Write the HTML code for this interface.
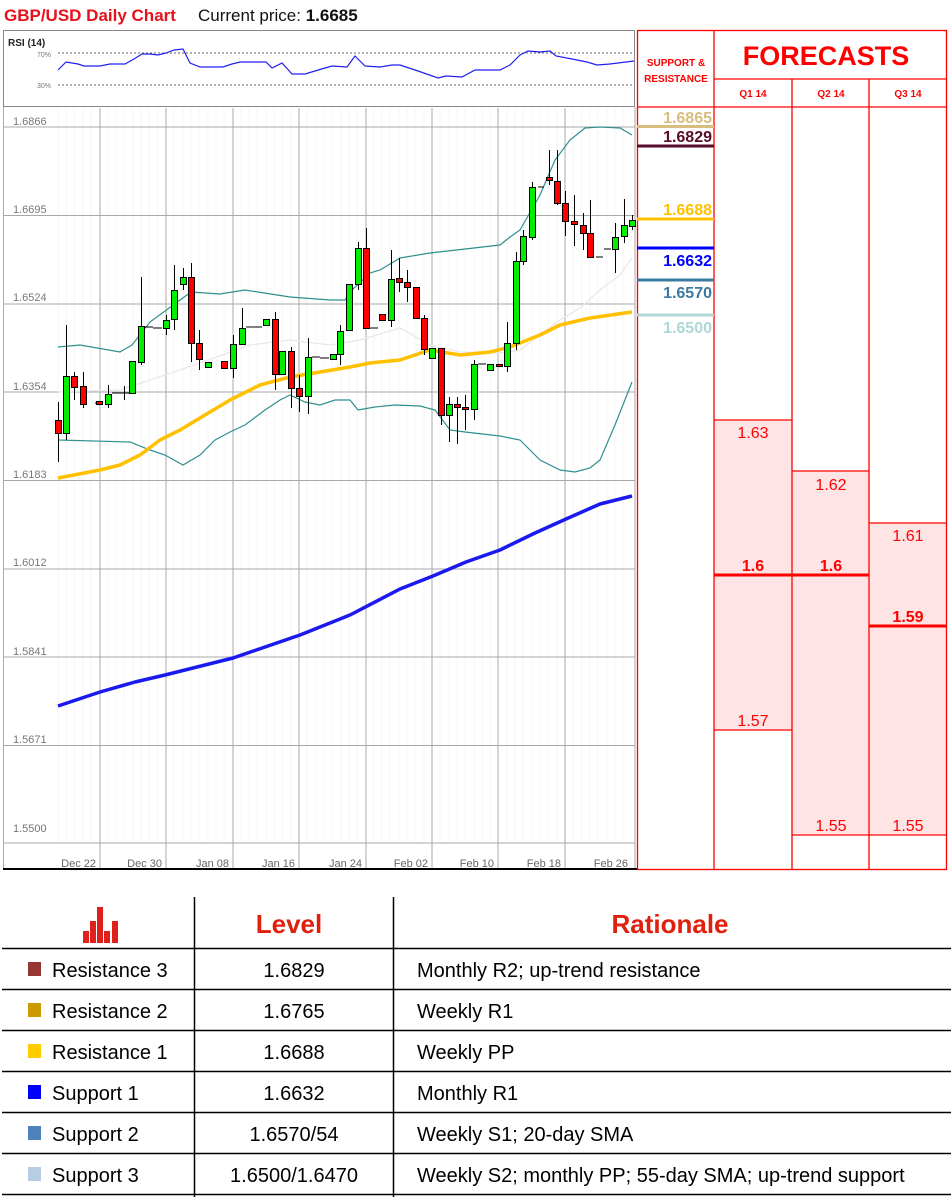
<!DOCTYPE html>
<html><head><meta charset="utf-8"><style>
body{margin:0;width:951px;height:1197px;overflow:hidden;background:#fff;font-family:"Liberation Sans Narrow","Liberation Sans",sans-serif}
svg text{font-family:"Liberation Sans Narrow","Liberation Sans",sans-serif}
</style></head><body>
<svg width="951" height="1197" viewBox="0 0 951 1197" xmlns="http://www.w3.org/2000/svg">
<rect width="951" height="1197" fill="#fff"/>
<text x="4" y="21" font-size="17" font-weight="bold" fill="#e8101a">GBP/USD Daily Chart</text>
<text x="198" y="21" font-size="17" fill="#111">Current price: <tspan font-weight="bold">1.6685</tspan></text>

<rect x="3.5" y="30.5" width="631" height="76" fill="#fff" stroke="#888"/>
<text x="8" y="46" font-size="10" font-weight="bold" fill="#222">RSI (14)</text>
<text x="37" y="57" font-size="7" fill="#777">70%</text>
<text x="37" y="88" font-size="7" fill="#777">30%</text>
<line x1="58" y1="53" x2="634" y2="53" stroke="#666" stroke-dasharray="2,2"/>
<line x1="58" y1="85" x2="634" y2="85" stroke="#666" stroke-dasharray="2,2"/>
<polyline fill="none" stroke="#2020f0" stroke-width="1.2" points="58,70 66,62 78,64 84,66 100,66 110,64 125,64 134,59 142,54 150,54 158,55 166,53 174,50 183,49 190,63 200,67 215,67 223,67 232,64 240,62 266,62 272,68 282,63 292,74 305,74 325,68 332,66 347,67 355,56 365,66 380,67 392,65 400,65 418,71 438,78 446,76 462,77 475,70 500,70 510,65 520,55 528,51 540,52 550,51 556,56 572,59 587,62 597,65 610,64 634,61"/>

<line x1="3.5" y1="107" x2="3.5" y2="868" stroke="#aaa"/>
<line x1="635" y1="107" x2="635" y2="868" stroke="#aaa"/>
<g stroke="#f4f4f4">
<path d="M58 108V843M66 108V843M74 108V843M83 108V843M91 108V843M108 108V843M116 108V843M124 108V843M133 108V843M141 108V843M149 108V843M158 108V843M174 108V843M183 108V843M191 108V843M199 108V843M208 108V843M216 108V843M224 108V843M241 108V843M249 108V843M257 108V843M266 108V843M274 108V843M282 108V843M291 108V843M307 108V843M316 108V843M324 108V843M332 108V843M341 108V843M349 108V843M357 108V843M374 108V843M382 108V843M390 108V843M399 108V843M407 108V843M415 108V843M424 108V843M440 108V843M449 108V843M457 108V843M465 108V843M474 108V843M482 108V843M490 108V843M507 108V843M515 108V843M523 108V843M532 108V843M540 108V843M548 108V843M557 108V843M573 108V843M582 108V843M590 108V843M598 108V843M607 108V843M615 108V843M623 108V843"/>
</g>
<g stroke="#a8a8a8">
<path d="M100 108V868M166 108V868M233 108V868M299 108V868M366 108V868M432 108V868M498 108V868M565 108V868"/>
<path d="M3 127H635M3 215.5H635M3 304H635M3 392H635M3 480.5H635M3 569H635M3 657H635M3 745.5H635M3 843H635"/>
</g>
<g font-size="11" fill="#777">
<text x="13" y="125">1.6866</text><text x="13" y="213">1.6695</text><text x="13" y="301">1.6524</text><text x="13" y="390">1.6354</text><text x="13" y="478">1.6183</text><text x="13" y="566">1.6012</text><text x="13" y="655">1.5841</text><text x="13" y="743">1.5671</text><text x="13" y="832">1.5500</text>
</g>
<g font-size="11" fill="#666" text-anchor="end">
<text x="96" y="867">Dec 22</text><text x="162" y="867">Dec 30</text><text x="229" y="867">Jan 08</text><text x="295" y="867">Jan 16</text><text x="362" y="867">Jan 24</text><text x="428" y="867">Feb 02</text><text x="494" y="867">Feb 10</text><text x="561" y="867">Feb 18</text><text x="628" y="867">Feb 26</text>
</g>
<line x1="3" y1="869" x2="637" y2="869" stroke="#000" stroke-width="2"/>

<polyline fill="none" stroke="#e8e8e8" stroke-width="1.3" points="58,392 120,390 180,370 250,345 290,340 330,345 360,340 400,328 430,345 460,352 500,353 520,350 540,335 560,320 580,308 600,290 620,275 632,258"/>
<polyline fill="none" stroke="#2f8f8f" stroke-width="1.2" points="58,347 80,345 120,352 132,345 150,322 191,292 220,294 245,290 290,297 330,300 345,300 352,290 370,273 380,270 400,258 430,253 500,245 510,237 520,230 540,195 555,160 570,140 585,128 600,127 620,128 632,135"/>
<polyline fill="none" stroke="#2f8f8f" stroke-width="1.2" points="58,440 130,442 150,450 165,455 183,465 200,455 215,440 230,432 245,425 265,410 280,400 290,395 305,402 320,405 335,400 350,400 358,410 375,407 395,405 420,406 435,410 450,430 465,432 500,436 520,440 540,460 560,470 575,472 590,468 600,460 615,425 632,382"/>
<polyline fill="none" stroke="#ffc000" stroke-width="3.5" stroke-linejoin="round" points="58,478 100,470 120,465 140,455 160,440 180,430 200,418 230,400 260,385 290,377 320,372 350,367 370,363 400,360 430,350 460,355 490,352 510,347 540,335 560,325 590,318 632,312"/>
<polyline fill="none" stroke="#1a1af0" stroke-width="3.5" stroke-linejoin="round" points="58,706 100,692 135,682 165,675 233,658 300,635 350,615 400,589 433,576 466,562 500,550 535,533 566,519 600,504 632,496"/>

<g stroke="#000" stroke-width="1">
<path d="M58.5 402V462M66.5 325V440M74.5 372V400M83.5 372V408M108.5 385V408M124.5 386V400M141.5 277V365M166.5 315V335M174.5 265V330M183.5 268V290M191.5 263V362M199.5 330V370M233.5 335V378M242.5 308V345M275.5 312V390M291.5 347V408M299.5 375V412M308.5 338V414M340.5 325V365M358.5 242V290M366.5 228V328M391.5 250V327M399.5 258V292M407.5 270V302M424.5 315V355M441.5 348V425M449.5 397V442M457.5 397V444M465.5 395V430M474.5 360V420M507.5 322V372M516.5 252V350M523.5 230V265M532.5 182V240M549.5 150V185M557.5 150V205M565.5 191V236M574.5 195V246M583.5 213V250M590.5 200V258M615.5 223V273M624.5 199V243M632.5 215V230"/>
<path d="M95 403H103M112 393H120M120 393H129M145 327H153M153 328H162M246 327H254M254 327H262M312 357H320M320 358H329M370 328H378M478 364H486M538 187H544M596 257H603M604 249H611"/>
</g>
<g stroke="#000" stroke-width="1">
<g fill="#ff0000">
<rect x="55.5" y="420.5" width="6" height="13"/><rect x="71.5" y="376.5" width="6" height="11"/><rect x="80.5" y="386.5" width="6" height="18"/><rect x="96.5" y="401.5" width="6" height="3"/><rect x="188.5" y="277.5" width="6" height="66"/><rect x="196.5" y="343.5" width="6" height="16"/><rect x="221.5" y="361.5" width="6" height="7"/><rect x="272.5" y="319.5" width="6" height="55"/><rect x="288.5" y="351.5" width="6" height="37"/><rect x="296.5" y="388.5" width="6" height="8"/><rect x="363.5" y="248.5" width="6" height="80"/><rect x="379.5" y="314.5" width="6" height="6"/><rect x="396.5" y="278.5" width="6" height="4"/><rect x="404.5" y="282.5" width="6" height="5"/><rect x="413.5" y="287.5" width="6" height="31"/><rect x="421.5" y="318.5" width="6" height="31"/><rect x="438.5" y="348.5" width="6" height="67"/><rect x="454.5" y="404.5" width="6" height="3"/><rect x="462.5" y="407.5" width="6" height="2"/><rect x="496.5" y="364.5" width="6" height="2"/><rect x="546.5" y="177.5" width="6" height="3"/><rect x="554.5" y="181.5" width="6" height="22"/><rect x="562.5" y="203.5" width="6" height="18"/><rect x="571.5" y="221.5" width="6" height="3"/><rect x="580.5" y="225.5" width="6" height="8"/><rect x="587.5" y="233.5" width="6" height="24"/>
</g>
<g fill="#00ee00">
<rect x="63.5" y="376.5" width="6" height="57"/><rect x="105.5" y="394.5" width="6" height="10"/><rect x="129.5" y="361.5" width="6" height="32"/><rect x="138.5" y="326.5" width="6" height="36"/><rect x="163.5" y="320.5" width="6" height="8"/><rect x="171.5" y="290.5" width="6" height="29"/><rect x="180.5" y="277.5" width="6" height="7"/><rect x="205.5" y="362.5" width="6" height="5"/><rect x="230.5" y="344.5" width="6" height="24"/><rect x="239.5" y="328.5" width="6" height="16"/><rect x="263.5" y="319.5" width="6" height="6"/><rect x="279.5" y="351.5" width="6" height="23"/><rect x="305.5" y="357.5" width="6" height="39"/><rect x="330.5" y="354.5" width="6" height="5"/><rect x="337.5" y="331.5" width="6" height="23"/><rect x="346.5" y="284.5" width="6" height="46"/><rect x="355.5" y="248.5" width="6" height="36"/><rect x="388.5" y="279.5" width="6" height="41"/><rect x="429.5" y="348.5" width="6" height="10"/><rect x="446.5" y="404.5" width="6" height="11"/><rect x="471.5" y="364.5" width="6" height="45"/><rect x="487.5" y="364.5" width="6" height="6"/><rect x="504.5" y="343.5" width="6" height="23"/><rect x="513.5" y="261.5" width="6" height="82"/><rect x="520.5" y="236.5" width="6" height="25"/><rect x="529.5" y="187.5" width="6" height="50"/><rect x="612.5" y="237.5" width="6" height="12"/><rect x="621.5" y="225.5" width="6" height="11"/><rect x="629.5" y="220.5" width="6" height="6"/>
</g>
</g>

<rect x="714" y="420" width="78" height="310" fill="#ffe4e6"/>
<rect x="792" y="471" width="77" height="364" fill="#ffe4e6"/>
<rect x="869" y="523" width="77" height="312" fill="#ffe4e6"/>
<g stroke="#ff0000" stroke-width="1.3" fill="none">
<rect x="637.5" y="30.5" width="309" height="839"/>
<path d="M714 30V870M714 79H947M637 107H947M792 79V870M869 79V870"/>
<path d="M714 420H792M714 730H792M792 471H869M792 835H947M869 523H947"/>
</g>
<path d="M714 575H869M869 626H947" stroke="#ff0000" stroke-width="3"/>
<text x="676" y="66" font-size="10" font-weight="bold" fill="#ff0000" text-anchor="middle">SUPPORT &amp;</text>
<text x="676" y="82" font-size="10" font-weight="bold" fill="#ff0000" text-anchor="middle">RESISTANCE</text>
<text x="826" y="65" font-size="27" font-weight="bold" fill="#ff0000" text-anchor="middle" font-family="Liberation Sans, sans-serif">FORECASTS</text>
<g font-size="10" font-weight="bold" fill="#ff0000" text-anchor="middle">
<text x="753" y="97">Q1 14</text><text x="831" y="97">Q2 14</text><text x="908" y="97">Q3 14</text>
</g>
<g font-size="16" fill="#ff0000" text-anchor="middle" font-family="Liberation Sans, sans-serif">
<text x="753" y="438">1.63</text><text x="753" y="726">1.57</text><text x="831" y="490">1.62</text><text x="831" y="831">1.55</text><text x="908" y="541">1.61</text><text x="908" y="831">1.55</text>
<text x="753" y="571" font-weight="bold">1.6</text><text x="831" y="571" font-weight="bold">1.6</text><text x="908" y="622" font-weight="bold">1.59</text>
</g>
<g stroke-width="3">
<path d="M637 126.5H714" stroke="#d9bd7e"/><path d="M637 146H714" stroke="#5a0a2a"/><path d="M637 219H714" stroke="#ffc000"/><path d="M637 248H714" stroke="#0000ff"/><path d="M637 280H714" stroke="#3a7aa0"/><path d="M637 315H714" stroke="#b0d6d6"/>
</g>
<g font-size="16" font-weight="bold" text-anchor="end" font-family="Liberation Sans, sans-serif">
<text x="712" y="123" fill="#d9bd7e">1.6865</text><text x="712" y="142" fill="#5a0a2a">1.6829</text><text x="712" y="215" fill="#ffc000">1.6688</text><text x="712" y="266" fill="#0000ff">1.6632</text><text x="712" y="298" fill="#3a7aa0">1.6570</text><text x="712" y="333" fill="#b0d6d6">1.6500</text>
</g>

<g fill="#e0201c">
<rect x="83" y="931" width="6" height="12"/><rect x="90" y="921" width="6" height="22"/><rect x="97" y="907" width="6" height="36"/><rect x="104" y="931" width="6" height="12"/><rect x="112" y="921" width="6" height="22"/>
</g>
<g stroke="#000" stroke-width="1.5">
<path d="M194.5 897V1197M393.5 897V1197"/>
<path d="M2 948.5H951M2 989.5H951M2 1030.5H951M2 1071.5H951M2 1112.5H951M2 1153.5H951M2 1194.5H951"/>
</g>
<text x="289" y="933" font-size="26" font-weight="bold" fill="#e0200c" text-anchor="middle" font-family="Liberation Sans, sans-serif">Level</text>
<text x="670" y="933" font-size="26" font-weight="bold" fill="#e0200c" text-anchor="middle" font-family="Liberation Sans, sans-serif">Rationale</text>
<rect x="28" y="962" width="13" height="14" fill="#943634"/>
<rect x="28" y="1003" width="13" height="14" fill="#cc9900"/>
<rect x="28" y="1044" width="13" height="14" fill="#ffcc00"/>
<rect x="28" y="1085" width="13" height="14" fill="#0000ff"/>
<rect x="28" y="1126" width="13" height="14" fill="#4f81bd"/>
<rect x="28" y="1167" width="13" height="14" fill="#b8cce4"/>
<g font-size="20" fill="#000">
<text x="52" y="977">Resistance 3</text><text x="52" y="1018">Resistance 2</text><text x="52" y="1059">Resistance 1</text><text x="52" y="1100">Support 1</text><text x="52" y="1141">Support 2</text><text x="52" y="1182">Support 3</text>
<g text-anchor="middle"><text x="294" y="977">1.6829</text><text x="294" y="1018">1.6765</text><text x="294" y="1059">1.6688</text><text x="294" y="1100">1.6632</text><text x="294" y="1141">1.6570/54</text><text x="294" y="1182">1.6500/1.6470</text></g>
<text x="417" y="977">Monthly R2; up-trend resistance</text><text x="417" y="1018">Weekly R1</text><text x="417" y="1059">Weekly PP</text><text x="417" y="1100">Monthly R1</text><text x="417" y="1141">Weekly S1; 20-day SMA</text><text x="417" y="1182">Weekly S2; monthly PP; 55-day SMA; up-trend support</text>
</g>
</svg>
</body></html>
